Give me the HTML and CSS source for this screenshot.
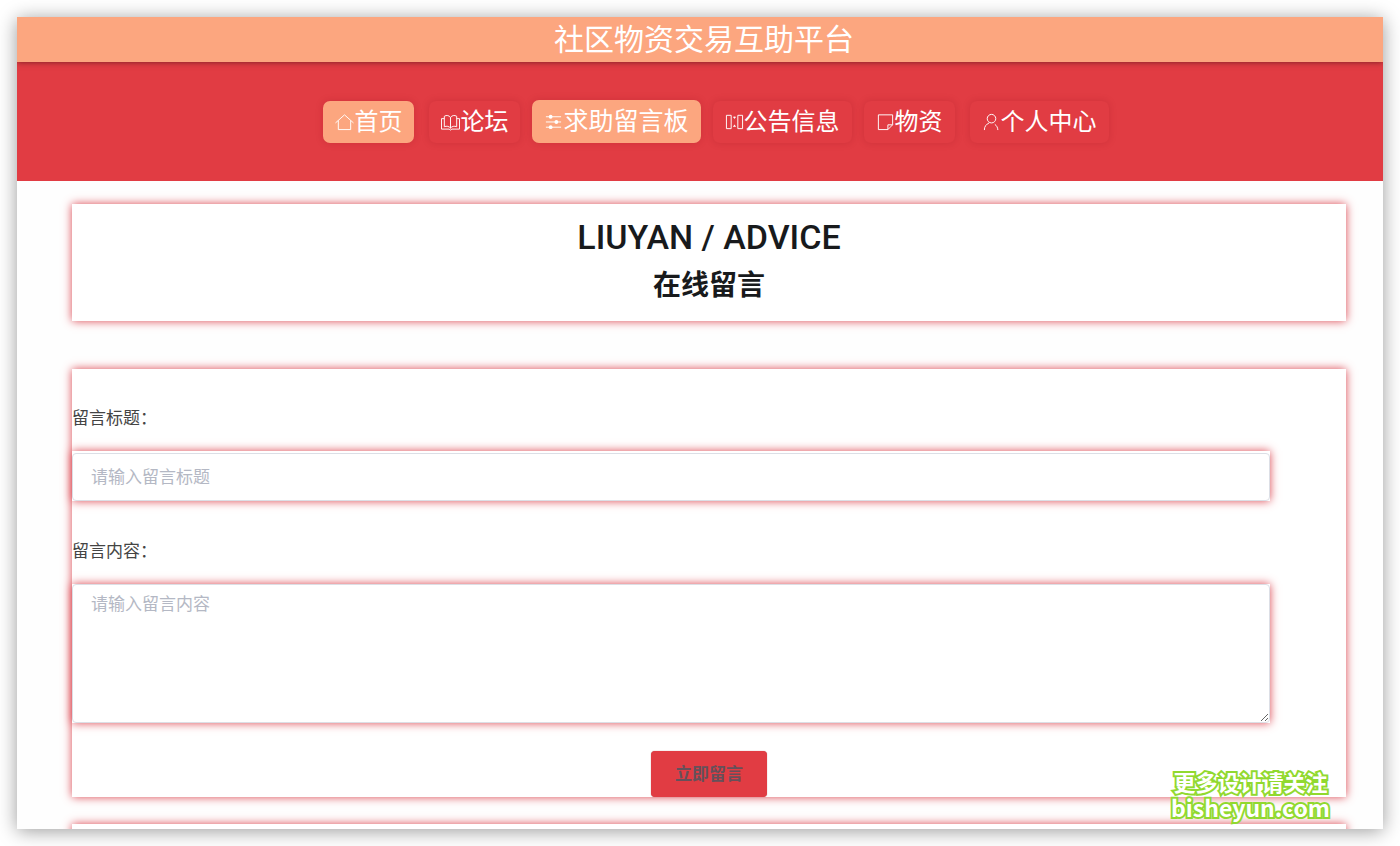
FILE: index.html
```html
<!DOCTYPE html>
<html lang="zh-CN">
<head>
<meta charset="utf-8">
<meta name="viewport" content="width=device-width, initial-scale=1">
<title>社区物资交易互助平台</title>
<link rel="stylesheet" href="styles.css">
</head>
<body>
<div class="window">
  <header class="banner">社区物资交易互助平台</header>
  <nav class="nav">
    <a class="nav-link home" href="#"><svg class="icon" viewBox="0 0 20 20"><path d="M.5 11.500 10 3l9.500 8.500M3.500 9v9.500h13V9"/></svg>首页</a>
    <a class="nav-link" href="#"><svg class="icon" viewBox="0 0 20 20"><path d="M10 6v11M10 6C9 3.500 5.500 3 3.500 4.500v11c2.500-1 5-.5 6.500 1.500 1.500-2 4-2.500 6.500-1.500v-11C14.500 3 11 3.500 10 6M3.500 7H.5v11h8l1.500 1 1.500-1h8V7h-3"/></svg>论坛</a>
    <a class="nav-link active" href="#"><svg class="icon" viewBox="0 0 20 20"><path d="M2 5h16M2 10.500h16M2 16h16"/><g class="knob"><circle cx="7" cy="5" r="2"/><circle cx="13" cy="10.500" r="2"/><circle cx="7" cy="16" r="2"/></g></svg>求助留言板</a>
    <a class="nav-link" href="#"><svg class="icon" viewBox="0 0 20 20"><path d="M1.500 3.500h5v14h-5zM13.500 3.500h5v14h-5zM8.500 5.500h3M8.500 15h3M10 5v2M10 13.500V15"/></svg>公告信息</a>
    <a class="nav-link" href="#"><svg class="icon" viewBox="0 0 20 20"><path d="M2.500 3h15v10.500L12.500 18.500h-10zM17.500 13.500h-5v5"/></svg>物资</a>
    <a class="nav-link user" href="#"><svg class="icon" viewBox="0 0 20 20"><circle cx="10" cy="7" r="4.500"/><path d="M2.500 19c0-4 2-6 5-7.500M13.500 13c2 1.500 3 3.200 3.200 6"/></svg>个人中心</a>
  </nav>
  <main class="content">
    <section class="card heading">
      <h1>LIUYAN / ADVICE</h1>
      <h2>在线留言</h2>
    </section>
    <form class="card form">
      <label for="title">留言标题：</label>
      <div class="field title-field"><input id="title" type="text" placeholder="请输入留言标题"></div>
      <label for="message">留言内容：</label>
      <div class="field"><textarea id="message" placeholder="请输入留言内容"></textarea></div>
      <button class="submit" type="button">立即留言</button>
    </form>
    <section class="card list"></section>
  </main>
  <div class="watermark"><div>更多设计请关注</div><div class="site">bisheyun.com</div></div>
</div>
</body>
</html>
```
FILE: styles.css
```css
* {
  box-sizing: border-box;
}

body {
  margin: 0;
  padding: 17px;
  background: #fff;
  font-family: "Noto Sans CJK SC", sans-serif;
}

.window {
  position: relative;
  height: calc(100vh - 34px);
  overflow: hidden;
  background: #fefefe;
  box-shadow: 0 2px 18px rgba(0, 0, 0, 0.4);
}

.banner {
  position: relative;
  padding: 0 0 4px 8px;
  background: #fca67f;
  box-shadow: 0 0 6px rgba(0, 0, 0, 0.5);
  color: #fff;
  font-size: 30px;
  line-height: 41px;
  text-align: center;
}

.nav {
  display: flex;
  align-items: center;
  justify-content: center;
  gap: 12px;
  padding: 38px 0 38px 32px;
  background: #e13c43;
}

.nav-link {
  display: flex;
  align-items: center;
  padding: 0 12px 4px;
  border-radius: 7px;
  box-shadow: 0 0 7px rgba(150, 20, 30, 0.25);
  color: #fff;
  font-size: 24px;
  line-height: 38px;
  text-decoration: none;
}

.home,
.active {
  background: #fca67f;
}

.home {
  margin-right: 3px;
}

.user {
  margin-left: 3px;
}

.active {
  font-size: 25px;
  line-height: 39px;
}

.icon {
  width: 19px;
  height: 19px;
  margin-top: 4px;
  fill: none;
  stroke: #fff;
  stroke-width: 1;
}

.knob {
  fill: #fff;
  stroke: none;
}

.content {
  padding: 23px 37px 0 55px;
}

.card {
  background: #fff;
  box-shadow: 0 0 9px #dc4650;
}

.heading {
  padding: 10px 0 15px;
  color: #181a1c;
  text-align: center;
}

.heading h1 {
  margin: 0;
  font: 500 34px/46px Roboto, sans-serif;
}

.heading h2 {
  margin: 0;
  font-size: 28px;
  font-weight: 700;
  line-height: 46px;
}

.form {
  margin-top: 48px;
  padding-top: 28px;
}

.form label {
  display: block;
  color: #444;
  font-size: 17px;
  line-height: 40px;
}

.field {
  width: 94%;
  margin-top: 14px;
  box-shadow: 0 0 9px #dc4650;
}

.title-field {
  margin-bottom: 29px;
  padding-top: 2px;
  background: #fff;
}

.field input,
.field textarea {
  display: block;
  width: 100%;
  border: 1px solid #dcdfe6;
  border-radius: 4px;
  background: #fff;
  color: #555;
  font: 17px/25px "Noto Sans CJK SC", sans-serif;
}

.field input {
  height: 48px;
  padding: 0 18px 4px;
}

.field textarea {
  height: 139px;
  padding: 5px 18px;
  resize: vertical;
}

.field ::placeholder {
  color: #b4b8c4;
}

.submit {
  display: block;
  margin: 28px auto 0;
  padding: 0 24px 2px;
  border: 0;
  border-radius: 4px;
  background: #e13c43;
  box-shadow: 0 0 1px #a66;
  color: #66505a;
  font: 700 17px/44px "Noto Sans CJK SC", sans-serif;
}

.list {
  height: 100px;
  margin-top: 27px;
}

.watermark {
  position: absolute;
  right: 53px;
  bottom: 9px;
  color: #fff;
  font-size: 22px;
  font-weight: 700;
  line-height: 26px;
  text-align: center;
  -webkit-text-stroke: 4px #91d92f;
  paint-order: stroke fill;
}

.site {
  font-size: 23px;
}
```
